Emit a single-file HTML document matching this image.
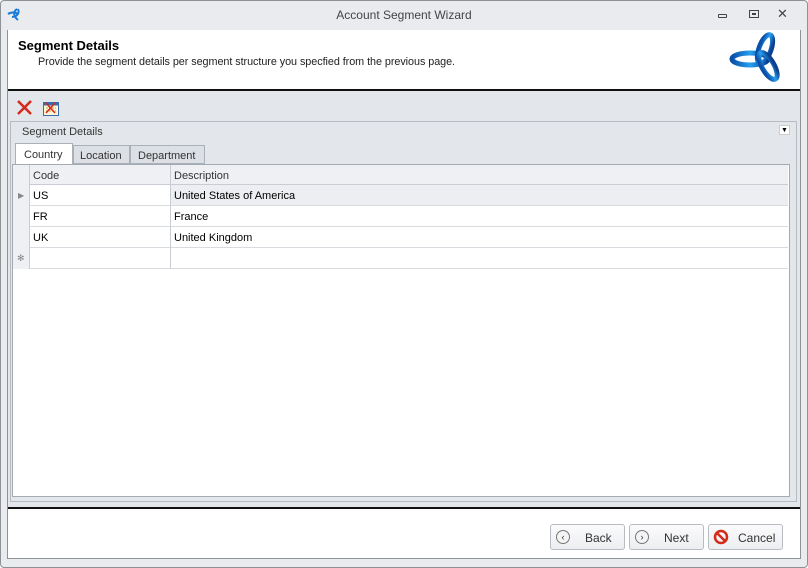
<!DOCTYPE html>
<html><head><style>
*{margin:0;padding:0;box-sizing:border-box}
body{width:808px;height:568px;background:#fff;font-family:"Liberation Sans",sans-serif;font-size:11px;color:#000;position:relative;overflow:hidden}
.abs{position:absolute}
.win{left:0;top:0;width:808px;height:568px;background:#e9ebee;border:1px solid #8d9297;border-radius:4px}
.title{left:0;top:8px;width:808px;text-align:center;font-size:12px;color:#444}
.btn{position:absolute;top:524px;height:26px;border:1px solid #b8bcc2;border-radius:3px;background:linear-gradient(#fbfbfc,#eceef1);font-size:12px;color:#333}
.btn span{position:absolute;top:6px}
.circ{position:absolute;left:5px;top:5px;width:14px;height:14px;border:1px solid #777;border-radius:50%;font-size:9px;line-height:12px;text-align:center;color:#333;background:#f4f4f4}
.row{position:absolute;left:13px;width:775px;height:21px;border-bottom:1px solid #d8dbe0}
.row div{position:absolute;top:5px}
</style></head><body>
<div class="abs win"></div>
<svg class="abs" style="left:6px;top:6px" width="18" height="16" viewBox="0 0 18 16"><path d="M2 8c3-2 7-2 10 0M6 11c4 0 8-3 6-8M11 3c-3 2-5 6 1 11" stroke="#1a7ad8" stroke-width="2" fill="none"/></svg>
<div class="abs title">Account Segment Wizard</div>
<div class="abs" style="left:718px;top:14px;width:9px;height:4px;border:1px solid #444;border-radius:1px"></div>
<div class="abs" style="left:749px;top:10px;width:10px;height:8px;border:1px solid #444"><div style="margin:2px 2px;width:4px;height:2px;border:1px solid #444"></div></div>
<div class="abs" style="left:777px;top:6px;font-size:13px;color:#444">✕</div>
<div class="abs" style="left:7px;top:30px;width:794px;height:529px;background:#fff;border-left:1px solid #8d9297;border-right:1px solid #8d9297;border-bottom:1px solid #8d9297"></div>
<div class="abs" style="left:18px;top:38px;font-size:13px;font-weight:bold">Segment Details</div>
<div class="abs" style="left:38px;top:56px;font-size:10.8px;color:#222;letter-spacing:-0.05px">Provide the segment details per segment structure you specfied from the previous page.</div>
<svg class="abs" style="left:728px;top:32px" width="56" height="52" viewBox="0 0 56 52"><defs><linearGradient id="g" x1="0" x2="1"><stop offset="0" stop-color="#0a4fa8"/><stop offset=".5" stop-color="#27a0f0"/><stop offset="1" stop-color="#0a3f90"/></linearGradient></defs><ellipse cx="22" cy="27" rx="18" ry="6" fill="none" stroke="url(#g)" stroke-width="5"/><ellipse cx="37" cy="17" rx="6" ry="15" transform="rotate(20 37 17)" fill="none" stroke="url(#g)" stroke-width="5"/><ellipse cx="40" cy="34" rx="6" ry="15" transform="rotate(-30 40 34)" fill="none" stroke="url(#g)" stroke-width="5"/></svg>
<div class="abs" style="left:8px;top:89px;width:792px;height:2px;background:#111"></div>
<div class="abs" style="left:8px;top:91px;width:792px;height:416px;background:#e3e6ea"></div>
<svg class="abs" style="left:16px;top:99px" width="18" height="18"><path d="M2 2L15 15M15 2L2 15" stroke="#d42a1a" stroke-width="2.5"/></svg>
<svg class="abs" style="left:42px;top:99px" width="18" height="18"><rect x="1.5" y="3.5" width="15" height="13" fill="#fff6d8" stroke="#3a6db0"/><rect x="1.5" y="3.5" width="15" height="3" fill="#3a6db0"/><path d="M4 9h10M4 12h10" stroke="#c9a040" stroke-dasharray="2 1"/><path d="M4 4L13 14M13 4L4 14" stroke="#d42a1a" stroke-width="1.6"/></svg>
<div class="abs" style="left:10px;top:121px;width:787px;height:381px;border:1px solid #b7bcc3;background:#e3e6ea"></div>
<div class="abs" style="left:22px;top:126px;color:#333">Segment Details</div>
<div class="abs" style="left:779px;top:125px;width:11px;height:10px;background:#fff;border:1px solid #ccc;font-size:7px;text-align:center;line-height:9px">▼</div>
<div class="abs" style="left:15px;top:143px;width:58px;height:22px;background:#fff;border:1px solid #aab0b8;border-bottom:none;padding:5px 0 0 8px;color:#333">Country</div>
<div class="abs" style="left:73px;top:145px;width:57px;height:19px;background:#dcdfe4;border:1px solid #aab0b8;padding:4px 0 0 6px;color:#333">Location</div>
<div class="abs" style="left:130px;top:145px;width:75px;height:19px;background:#dcdfe4;border:1px solid #aab0b8;padding:4px 0 0 7px;color:#333">Department</div>
<div class="abs" style="left:12px;top:164px;width:778px;height:333px;background:#fff;border:1px solid #a5abb3"></div>
<div class="abs" style="left:13px;top:165px;width:775px;height:20px;background:#eef0f3;border-bottom:1px solid #c9cdd3"></div>
<div class="abs" style="left:33px;top:170px;color:#333">Code</div>
<div class="abs" style="left:174px;top:170px;color:#333">Description</div>
<div class="row" style="top:185px;background:#fff"><div style="left:157px;width:618px;top:0;height:20px;background:#eceef1"></div><div style="left:20px">US</div><div style="left:161px">United States of America</div></div>
<div class="row" style="top:206px"><div style="left:20px">FR</div><div style="left:161px">France</div></div>
<div class="row" style="top:227px"><div style="left:20px">UK</div><div style="left:161px">United Kingdom</div></div>
<div class="row" style="top:248px"></div>
<div class="abs" style="left:13px;top:165px;width:17px;height:104px;background:#eef0f3;border-right:1px solid #c9cdd3"></div>
<div class="abs" style="top:191px;font-size:8px;color:#888;left:18px">▶</div>
<div class="abs" style="left:17px;top:253px;font-size:9px;color:#888">✻</div>
<div class="abs" style="left:170px;top:165px;width:1px;height:104px;background:#c9cdd3"></div>
<div class="abs" style="left:8px;top:507px;width:792px;height:2px;background:#111"></div>
<div class="btn" style="left:550px;width:75px"><div class="circ">‹</div><span style="left:34px">Back</span></div>
<div class="btn" style="left:629px;width:75px"><div class="circ">›</div><span style="left:34px">Next</span></div>
<div class="btn" style="left:708px;width:75px"><svg style="position:absolute;left:4px;top:4px" width="16" height="16"><circle cx="8" cy="8" r="6" fill="none" stroke="#d42a1a" stroke-width="2.5"/><path d="M4 4L12 12" stroke="#d42a1a" stroke-width="2.5"/></svg><span style="left:29px">Cancel</span></div>
</body></html>
